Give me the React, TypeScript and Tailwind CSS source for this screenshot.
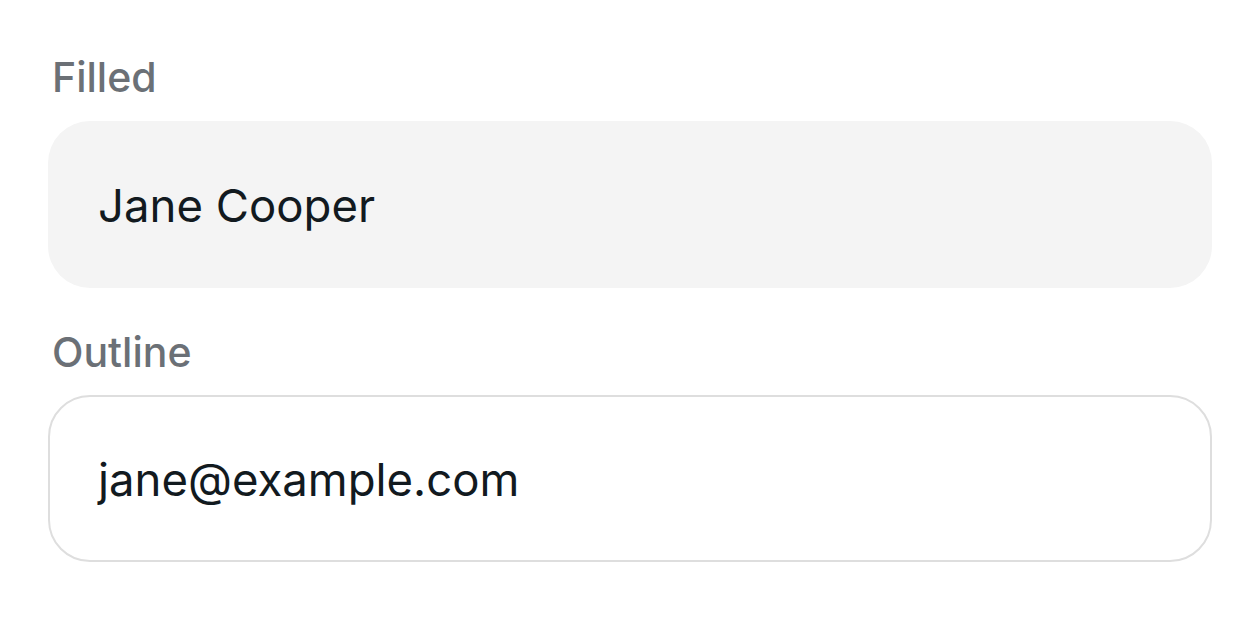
export default function App() {
  return (
    <div className="min-h-screen bg-white font-['Inter',sans-serif] px-[48px] pt-[53px]">
      {/* Filled */}
      <div className="flex flex-col">
        <label className="pl-[4px] text-[41px] leading-[48px] font-medium text-[#6b7076]">Filled</label>
        <div className="mt-[20px] h-[167px] rounded-[42px] bg-[#f4f4f4] px-[50px] pt-[4px] flex items-center">
          <span className="text-[45.5px] text-[#121a1f]">Jane Cooper</span>
        </div>
      </div>

      {/* Outline */}
      <div className="flex flex-col mt-[40px]">
        <label className="pl-[4px] text-[41px] leading-[48px] font-medium text-[#6b7076]">Outline</label>
        <div className="mt-[19px] h-[167px] rounded-[42px] border-2 border-[#dedede] bg-white px-[48px] pt-[4px] flex items-center">
          <span className="text-[45.5px] text-[#121a1f]">jane@example.com</span>
        </div>
      </div>
    </div>
  );
}
